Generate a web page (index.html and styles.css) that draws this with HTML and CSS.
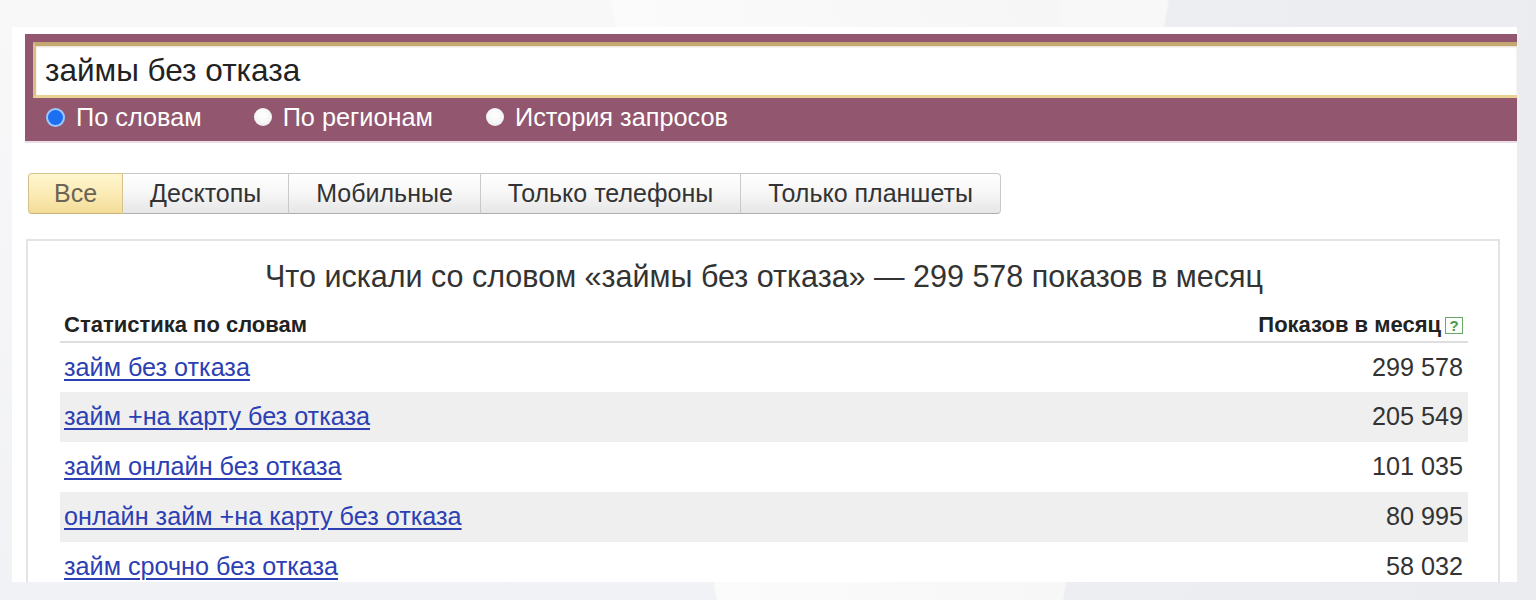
FILE: index.html
```html
<!DOCTYPE html>
<html lang="ru">
<head>
<meta charset="utf-8">
<title>Подбор слов</title>
<link rel="stylesheet" href="styles.css">
</head>
<body>
<div class="slide">
  <div class="panel">
    <div class="searchbar">
      <div class="query">займы без отказа</div>
      <div class="modes">
        <div class="mode"><span class="radio radio-on"></span><span class="mode-label">По словам</span></div>
        <div class="mode"><span class="radio"></span><span class="mode-label">По регионам</span></div>
        <div class="mode"><span class="radio"></span><span class="mode-label">История запросов</span></div>
      </div>
    </div>

    <div class="tabs">
      <div class="tab tab-active">Все</div>
      <div class="tab">Десктопы</div>
      <div class="tab">Мобильные</div>
      <div class="tab">Только телефоны</div>
      <div class="tab">Только планшеты</div>
    </div>

    <div class="result">
      <div class="result-title">Что искали со словом «займы без отказа» — 299 578 показов в месяц</div>
      <table class="stats">
        <thead>
          <tr>
            <th class="col-word">Статистика по словам</th>
            <th class="col-count">Показов в месяц<span class="help">?</span></th>
          </tr>
        </thead>
        <tbody>
          <tr><td class="col-word"><a href="#">займ без отказа</a></td><td class="col-count">299 578</td></tr>
          <tr class="odd"><td class="col-word"><a href="#">займ +на карту без отказа</a></td><td class="col-count">205 549</td></tr>
          <tr><td class="col-word"><a href="#">займ онлайн без отказа</a></td><td class="col-count">101 035</td></tr>
          <tr class="odd"><td class="col-word"><a href="#">онлайн займ +на карту без отказа</a></td><td class="col-count">80 995</td></tr>
          <tr><td class="col-word"><a href="#">займ срочно без отказа</a></td><td class="col-count">58 032</td></tr>
        </tbody>
      </table>
    </div>
  </div>
</div>
</body>
</html>
```

FILE: styles.css
```css
html, body {
  margin: 0;
  padding: 0;
}

body {
  width: 1536px;
  height: 600px;
  overflow: hidden;
  font-family: "Liberation Sans", Arial, sans-serif;
  color: #333;
  background:
    linear-gradient(100deg, transparent 0, transparent 1150px, #eceef1 1152px, #eaecef 100%),
    linear-gradient(80deg, transparent 0, transparent 705px, #fbfbfc 707px, #f6f6f7 1140px, transparent 1150px),
    linear-gradient(to bottom, #f8f8f9 0, #f1f2f5 100%);
}

.slide {
  box-sizing: border-box;
  height: 600px;
  padding: 27px 19px 0 12px;
}

.panel {
  box-sizing: border-box;
  height: 555px;
  overflow: hidden;
  background: #fff;
  padding: 7px 0 0 13px;
}

/* search bar */
.searchbar {
  box-sizing: border-box;
  height: 109px;
  background: #92566e;
  padding: 8px 0 0 8px;
  border-bottom: 2px solid #eadfe5;
}

.query {
  box-sizing: border-box;
  height: 56px;
  background: #fff;
  border-top: 4px solid #c4a872;
  border-left: 3px solid #d6c08a;
  border-bottom: 3px solid #e8d294;
  padding-left: 9px;
  font-size: 31.5px;
  line-height: 49px;
  color: #222;
  box-shadow: inset 0 1px 2px rgba(150, 110, 60, 0.25);
}

.modes {
  box-sizing: border-box;
  height: 43px;
  display: flex;
  align-items: center;
  gap: 51px;
  padding: 0 0 5px 13px;
}

.mode {
  display: flex;
  align-items: center;
  gap: 11px;
}

.radio {
  box-sizing: border-box;
  width: 18px;
  height: 18px;
  border-radius: 50%;
  background: radial-gradient(circle at 50% 40%, #ffffff 0, #f4f4f4 60%, #dcdcdc 100%);
}

.radio-on {
  width: 19px;
  height: 19px;
  background: #1b6ff0;
  border: 2px solid #9cc8ff;
}

.mode-label {
  font-size: 25.3px;
  line-height: 30px;
  color: #fff;
}

.mode:nth-child(2) .radio {
  margin-left: 1px;
}

.mode:nth-child(3) {
  margin-left: 2px;
}

/* device tabs */
.tabs {
  display: flex;
  margin: 30px 0 0 3px;
}

.tab {
  box-sizing: border-box;
  height: 41px;
  padding: 0 27px;
  font-size: 25px;
  line-height: 38px;
  color: #333;
  background: linear-gradient(to bottom, #ffffff 0, #f6f6f6 50%, #e6e6e6 100%);
  border: 1px solid #c9c9c9;
  border-bottom-color: #aeaeae;
  border-left: none;
}

.tab:first-child {
  padding: 0 25px;
  border-left: 1px solid #d2c18e;
  border-radius: 4px 0 0 4px;
}

.tab:last-child {
  border-radius: 0 4px 4px 0;
}

.tab-active {
  color: #6a6455;
  background: linear-gradient(to bottom, #fff6cf 0, #fbeab3 55%, #f3dc97 100%);
  border-color: #d6c48e;
  border-bottom-color: #c8b47a;
}

/* result box */
.result {
  box-sizing: border-box;
  margin: 25px 17px 0 1px;
  height: 400px;
  border: 2px solid #e4e4e4;
  border-bottom: none;
  padding: 19px 30px 0 32px;
}

.result-title {
  text-align: center;
  font-size: 30.5px;
  line-height: 32px;
  color: #333;
}

.stats {
  width: 100%;
  border-collapse: collapse;
}

.stats th {
  padding: 21px 5px 4px 4px;
  font-size: 22px;
  line-height: 24px;
  font-weight: bold;
  color: #222;
  border-bottom: 2px solid #dedede;
  vertical-align: bottom;
}

.stats td {
  box-sizing: border-box;
  height: 50px;
  padding: 0 5px 2px 4px;
  font-size: 25.2px;
  line-height: 46px;
  color: #333;
}

.stats .col-word {
  text-align: left;
}

.stats .col-count {
  text-align: right;
  white-space: nowrap;
}

.stats tr.odd td {
  background: #efefef;
}

.stats a {
  color: #2c40b4;
  text-decoration: underline;
  text-decoration-thickness: 2px;
  text-underline-offset: 3px;
}

.help {
  display: inline-block;
  box-sizing: border-box;
  width: 18px;
  height: 17px;
  margin-left: 4px;
  border: 1px solid #6aa86a;
  color: #4c9a4c;
  font-size: 15px;
  line-height: 15px;
  text-align: center;
  vertical-align: 1px;
  background: #fbfffb;
}
```
